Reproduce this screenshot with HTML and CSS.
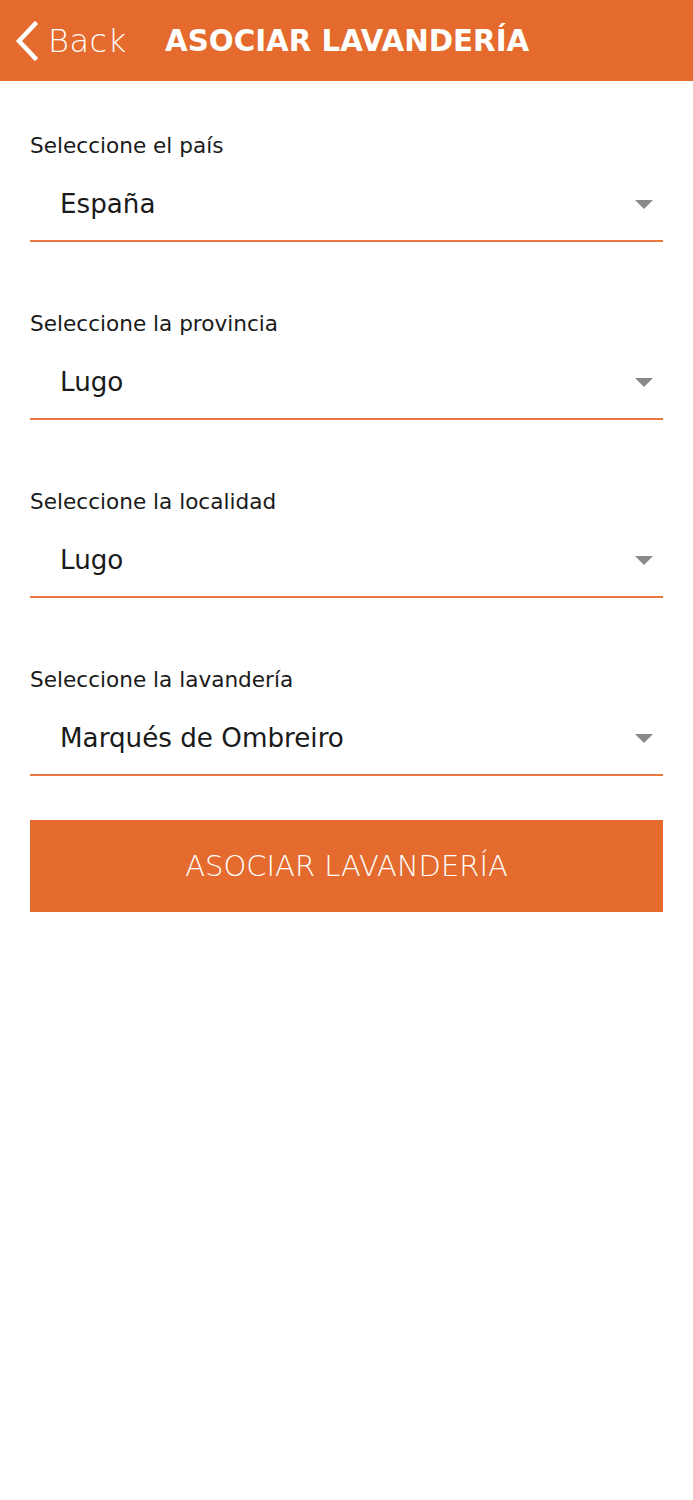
FILE: index.html
```html
<!DOCTYPE html>
<html lang="es">
<head>
<meta charset="utf-8">
<link rel="stylesheet" href="styles.css">
</head>
<body>
<header class="topbar">
  <div class="back">
    <svg class="chev" width="26" height="40" viewBox="0 0 26 40"><path d="M21 3 L5 20 L21 37" fill="none" stroke="#fff" stroke-width="4.5" stroke-linecap="square"/></svg>
    <span class="back-text">Back</span>
  </div>
  <h1 class="title">ASOCIAR LAVANDERÍA</h1>
</header>
<main class="content">
  <div class="field">
    <div class="label">Seleccione el país</div>
    <div class="select"><span class="value">España</span><span class="arrow"></span></div>
  </div>
  <div class="field">
    <div class="label">Seleccione la provincia</div>
    <div class="select"><span class="value">Lugo</span><span class="arrow"></span></div>
  </div>
  <div class="field">
    <div class="label">Seleccione la localidad</div>
    <div class="select"><span class="value">Lugo</span><span class="arrow"></span></div>
  </div>
  <div class="field">
    <div class="label">Seleccione la lavandería</div>
    <div class="select"><span class="value">Marqués de Ombreiro</span><span class="arrow"></span></div>
  </div>
  <button class="btn">ASOCIAR LAVANDERÍA</button>
</main>
</body>
</html>
```
FILE: styles.css
```css
* { box-sizing: border-box; }
html, body { margin: 0; padding: 0; background: #fff; }
body { font-family: "DejaVu Sans", sans-serif; color: #1a1a1a; }
.topbar {
  height: 81px;
  background: #E46B2D;
  display: flex;
  align-items: center;
  color: #fff;
  padding-left: 14px;
}
.back { display: flex; align-items: center; gap: 8px; width: 151px; }
.chev { display: block; }
.back-text { font-size: 32px; font-weight: 300; letter-spacing: 0.5px; }
.title { margin: 0; font-size: 29.3px; font-weight: 600; letter-spacing: 0; }
.content { padding: 50px 30px 0; display: flex; flex-direction: column; }
.field { display: flex; flex-direction: column; }
.field + .field { margin-top: 67px; }
.label { font-size: 21.6px; height: 30px; line-height: 30px; }
.select {
  height: 81px;
  display: flex;
  align-items: center;
  justify-content: space-between;
  padding: 7px 10px 0 30px;
  border-bottom: 2px solid #E8763F;
}
.value { font-size: 26.2px; }
.arrow {
  width: 0; height: 0;
  border-left: 9px solid transparent;
  border-right: 9px solid transparent;
  border-top: 9px solid #8a8a8a;
}
.btn {
  margin-top: 44px;
  height: 92px;
  border: none;
  background: #E46B2D;
  color: #fff;
  font-family: inherit;
  font-size: 29px;
  font-weight: 300;
}
```
